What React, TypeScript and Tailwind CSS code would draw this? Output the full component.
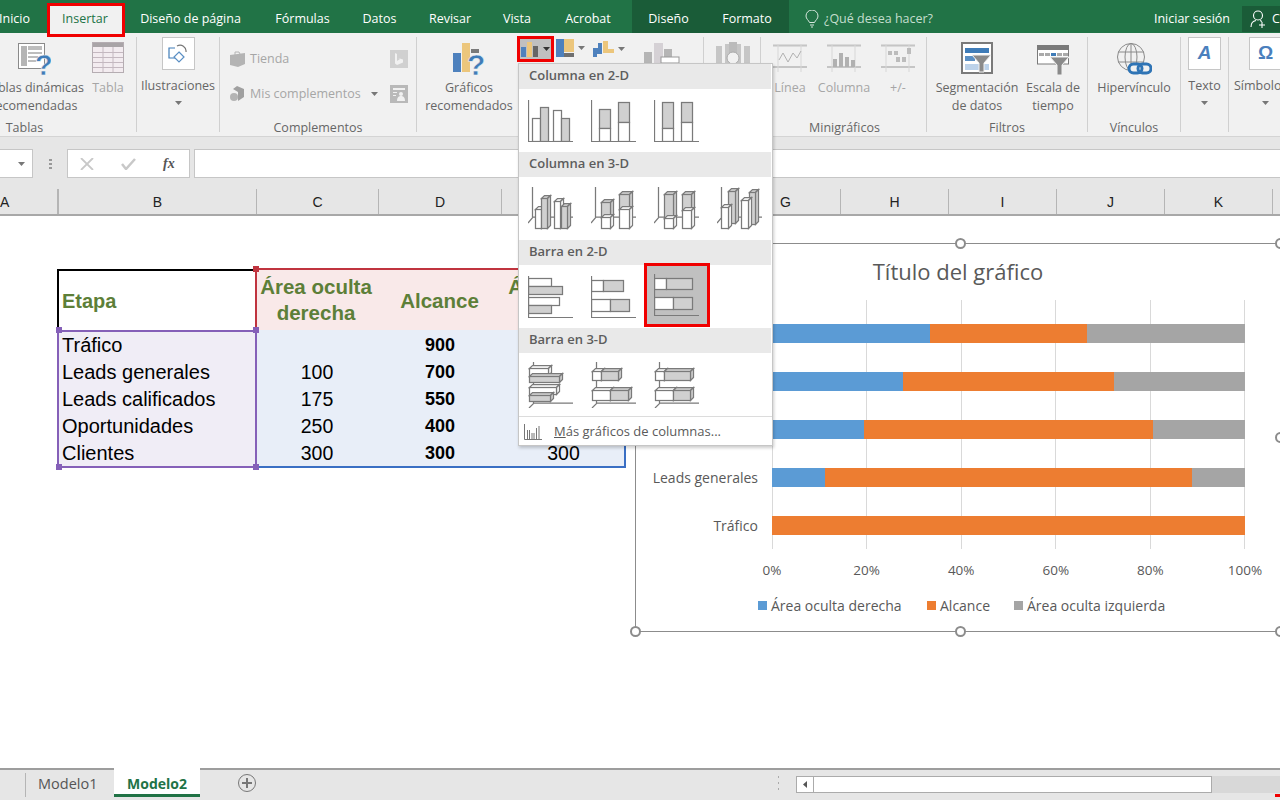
import type { ReactNode } from 'react'

const tabs = [
  { label: 'Diseño de página', w: 'w-[131px]' },
  { label: 'Fórmulas', w: 'w-[93px]' },
  { label: 'Datos', w: 'w-[61px]' },
  { label: 'Revisar', w: 'w-[80px]' },
  { label: 'Vista', w: 'w-[54px]' },
  { label: 'Acrobat', w: 'w-[88px]' },
]

const columns = [
  { label: 'A', w: 'w-[59px]', cls: 'justify-start border-[#a8a8a8] border-r-2' },
  { label: 'B', w: 'w-[198px]', cls: '' },
  { label: 'C', w: 'w-[122px]', cls: '' },
  { label: 'D', w: 'w-[123px]', cls: '' },
  { label: 'E', w: 'w-[110px]', cls: '' },
  { label: 'F', w: 'w-[119px]', cls: '' },
  { label: 'G', w: 'w-[110px]', cls: '' },
  { label: 'H', w: 'w-[108px]', cls: '' },
  { label: 'I', w: 'w-[108px]', cls: '' },
  { label: 'J', w: 'w-[108px]', cls: '' },
  { label: 'K', w: 'w-[108px]', cls: '' },
]

const rows = [
  { name: 'Tráfico', right: '', reach: 900, left: '' },
  { name: 'Leads generales', right: '100', reach: 700, left: '100' },
  { name: 'Leads calificados', right: '175', reach: 550, left: '175' },
  { name: 'Oportunidades', right: '250', reach: 400, left: '250' },
  { name: 'Clientes', right: '300', reach: 300, left: '300' },
]

const chartRows = [...rows].reverse().map(r => {
  const a = Number(r.right || 0)
  const c = Number(r.left || 0)
  const total = a + r.reach + c
  return { name: r.name, a: (a / total) * 100, b: (r.reach / total) * 100, c: (c / total) * 100 }
})

const LINE = '#7a7a7a'
const FILL = '#d0d0d0'
const SW = '1.25'

function Caret({ color = '#777' }: { color?: string }) {
  return (
    <svg width="7" height="4" viewBox="0 0 7 4">
      <path d="M0 0h7L3.500 4z" fill={color} />
    </svg>
  )
}

function Rect({ x, y, w, h, gray }: { x: number; y: number; w: number; h: number; gray?: boolean }) {
  return <rect x={x} y={y} width={w} height={h} fill={gray ? FILL : '#fff'} stroke={LINE} strokeWidth={SW} />
}

function Box({ x, y, w, h, gray }: { x: number; y: number; w: number; h: number; gray?: boolean }) {
  const d = 3
  return (
    <g stroke={LINE} strokeWidth={SW} fill={gray ? FILL : '#fff'}>
      <path d={`M${x} ${y}l${d} ${-d}h${w}l${-d} ${d}z`} />
      <path d={`M${x + w} ${y}l${d} ${-d}v${h}l${-d} ${d}z`} />
      <rect x={x} y={y} width={w} height={h} />
    </g>
  )
}

function Thumb({ children, h = 42 }: { children: ReactNode; h?: number }) {
  return (
    <svg width="45" height={h} viewBox={`0 0 45 ${h}`}>
      {children}
    </svg>
  )
}

const axes2d = <path d="M.5 0v41.500H45" fill="none" stroke={LINE} strokeWidth={SW} />
const axes3d = <path d="M4.500 0v30M0 36l5-6h40" fill="none" stroke={LINE} strokeWidth={SW} />

const columnas2d = [
  <Thumb key="a">
    <Rect x={4.5} y={18.5} w={8} h={23} />
    <Rect x={12.5} y={7.5} w={8} h={34} gray />
    <Rect x={25.5} y={10.5} w={8} h={31} />
    <Rect x={33.5} y={18.5} w={8} h={23} gray />
    {axes2d}
  </Thumb>,
  <Thumb key="b">
    <Rect x={8.5} y={9.5} w={11} h={19} gray />
    <Rect x={8.5} y={28.5} w={11} h={13} />
    <Rect x={27.5} y={2.5} w={11} h={20} gray />
    <Rect x={27.5} y={22.5} w={11} h={19} />
    {axes2d}
  </Thumb>,
  <Thumb key="c">
    <Rect x={8.5} y={2.5} w={11} h={26} gray />
    <Rect x={8.5} y={28.5} w={11} h={13} />
    <Rect x={27.5} y={2.5} w={11} h={20} gray />
    <Rect x={27.5} y={22.5} w={11} h={19} />
    {axes2d}
  </Thumb>,
]

const columnas3d = [
  <Thumb key="a" h={43}>
    {axes3d}
    <Box x={7.5} y={22.5} w={6} h={19} />
    <Box x={13.5} y={11.5} w={6} h={30} gray />
    <Box x={26.5} y={14.5} w={6} h={27} />
    <Box x={33.5} y={19.5} w={6} h={22} gray />
  </Thumb>,
  <Thumb key="b" h={43}>
    {axes3d}
    <Box x={10.5} y={15.5} w={9} h={15} gray />
    <Box x={10.5} y={30.5} w={9} h={11} />
    <Box x={28.5} y={7.5} w={10} h={15} gray />
    <Box x={28.5} y={22.5} w={10} h={19} />
  </Thumb>,
  <Thumb key="c" h={43}>
    {axes3d}
    <Box x={10.5} y={7.5} w={9} h={24} gray />
    <Box x={10.5} y={31.5} w={9} h={10} />
    <Box x={28.5} y={7.5} w={9} h={16} gray />
    <Box x={28.5} y={23.5} w={9} h={18} />
  </Thumb>,
  <Thumb key="d" h={43}>
    {axes3d}
    <Box x={11.5} y={4.5} w={7} h={32} gray />
    <Box x={32.5} y={5.5} w={6} h={32} gray />
    <Box x={4.5} y={20.5} w={7} h={21} />
    <Box x={24.5} y={13.5} w={7} h={28} />
  </Thumb>,
]

const barras2d = [
  <Thumb key="a">
    <Rect x={.5} y={2.5} w={23} h={8} />
    <Rect x={.5} y={10.5} w={34} h={8} gray />
    <Rect x={.5} y={21.5} w={31} h={8} />
    <Rect x={.5} y={29.5} w={23} h={8} gray />
    {axes2d}
  </Thumb>,
  <Thumb key="b">
    <Rect x={.5} y={4.5} w={12} h={11} />
    <Rect x={12.5} y={4.5} w={20} h={11} gray />
    <Rect x={.5} y={23.5} w={19} h={12} />
    <Rect x={19.5} y={23.5} w={19} h={12} gray />
    {axes2d}
  </Thumb>,
  <Thumb key="c">
    <Rect x={.5} y={4.5} w={12} h={11} />
    <Rect x={12.5} y={4.5} w={26} h={11} gray />
    <Rect x={.5} y={23.5} w={19} h={12} />
    <Rect x={19.5} y={23.5} w={19} h={12} gray />
    {axes2d}
  </Thumb>,
]

const axesBar3d = <path d="M5.500 0v42M1 46l5-5h39" fill="none" stroke={LINE} strokeWidth={SW} />

const barras3d = [
  <Thumb key="a" h={46}>
    {axesBar3d}
    <Box x={1.5} y={6.5} w={19} h={7} />
    <Box x={1.5} y={14.5} w={30} h={6} gray />
    <Box x={1.5} y={25.5} w={27} h={7} />
    <Box x={1.5} y={33.5} w={21} h={6} gray />
  </Thumb>,
  <Thumb key="b" h={46}>
    {axesBar3d}
    <Box x={1.5} y={9.5} w={9} h={9} />
    <Box x={10.5} y={9.5} w={17} h={9} gray />
    <Box x={1.5} y={28.5} w={18} h={10} />
    <Box x={19.5} y={28.5} w={18} h={10} gray />
  </Thumb>,
  <Thumb key="c" h={46}>
    {axesBar3d}
    <Box x={1.5} y={9.5} w={9} h={9} />
    <Box x={10.5} y={9.5} w={26} h={9} gray />
    <Box x={1.5} y={28.5} w={18} h={10} />
    <Box x={19.5} y={28.5} w={17} h={10} gray />
  </Thumb>,
]

function QuestionMark({ x, y, size = 24 }: { x: number; y: number; size?: number }) {
  return (
    <text x={x} y={y} fontSize={size} fontWeight="700" fill="#3f7cb8" fontFamily="Liberation Sans, sans-serif" stroke="#f1f1f1" strokeWidth=".5">
      ?
    </text>
  )
}

function PivotIcon() {
  return (
    <svg width="33" height="33" viewBox="0 0 33 33">
      <rect x=".5" y=".5" width="26" height="25" fill="#fff" stroke="#8a8a8a" />
      <rect x="3" y="3" width="6" height="20" fill="#b5b5b5" />
      <path d="M10 3h14v4H10zM10 9h14v2H10zM10 13h10v2H10zM10 17h8v2H10z" fill="#bdbdbd" />
      <QuestionMark x={17} y={32} size={29} />
    </svg>
  )
}

function TablaIcon() {
  return (
    <svg width="33" height="32" viewBox="0 0 33 32">
      <rect x=".5" y=".5" width="31" height="30" fill="#f3ecf0" stroke="#b5adb2" />
      <rect x="1" y="1" width="30" height="4" fill="#a9a4a7" />
      <path d="M1 10.500h30M1 15.500h30M1 20.500h30M1 25.500h30M11 5v25M21 5v25" stroke="#c4b8c0" fill="none" />
    </svg>
  )
}

function Sq({ children }: { children: ReactNode }) {
  return <div className="w-[33px] h-[33px] bg-white border border-[#c6c6c6] flex items-center justify-center">{children}</div>
}

function BigButton({ icon, lines, w, top = 'pt-[5px]' }: { icon: ReactNode; lines: string[]; w: string; top?: string }) {
  return (
    <div className={`${w} shrink-0 flex flex-col items-center`}>
      <div className={`h-[42px] ${top} flex justify-center`}>{icon}</div>
      {lines.map(l => (
        <div key={l} className="leading-[18px] whitespace-nowrap">{l}</div>
      ))}
    </div>
  )
}

function Group({ w, label, children, cls = '' }: { w: string; label?: string; children: ReactNode; cls?: string }) {
  return (
    <div className={`${w} ${cls} shrink-0 h-[95px] mt-[4px] border-r border-[#d0d0d0] flex flex-col`}>
      <div className="h-[82px] shrink-0 flex">{children}</div>
      {label && <div className="h-[13px] shrink-0 text-center leading-[18px] text-[#666]">{label}</div>}
    </div>
  )
}

function Spark({ children }: { children: ReactNode }) {
  return (
    <svg width="34" height="30" viewBox="0 0 34 30" className="opacity-60">
      <path d="M0 1.500h34M0 23h34" stroke="#a8a8a8" strokeWidth="2" />
      <path d="M5 0v28M28 0v28" stroke="#c8c8c8" strokeWidth="1" />
      {children}
    </svg>
  )
}

function Handle({ cls }: { cls: string }) {
  return <div className={`absolute w-[6px] h-[6px] ${cls}`} />
}

function Knob({ cls }: { cls: string }) {
  return <div className={`absolute w-[11px] h-[11px] rounded-full bg-white border-2 border-[#8c8c8c] ${cls}`} />
}

function MenuHead({ children }: { children: ReactNode }) {
  return <div className="h-[25px] mr-[1px] pb-[1px] bg-[#e9e9e9] pl-[10px] flex items-center font-semibold text-[#5d5d5d]">{children}</div>
}

function MenuRow({ items, h = 'h-[63px]', active }: { items: ReactNode[]; h?: string; active?: number }) {
  return (
    <div className={`${h} flex`}>
      {items.map((item, i) =>
        i === active ? (
          <div key={i} className="relative z-10 w-[66px] h-[64px] -mt-[2px] -mx-[1.5px] bg-[#c0c0c0] border-[3px] border-[#f00000] flex items-center justify-center">
            {item}
          </div>
        ) : (
          <div key={i} className="w-[63px] flex items-center justify-center">{item}</div>
        )
      )}
    </div>
  )
}

function ChartMenu() {
  return (
    <div className="absolute z-30 left-[518px] top-[63px] w-[255px] h-[383px] bg-white border border-[#c6c6c6] shadow-[1px_2px_3px_rgba(0,0,0,0.2)] text-[13px]">
      <MenuHead>Columna en 2-D</MenuHead>
      <MenuRow items={columnas2d} />
      <MenuHead>Columna en 3-D</MenuHead>
      <MenuRow items={columnas3d} />
      <MenuHead>Barra en 2-D</MenuHead>
      <MenuRow items={barras2d} active={2} />
      <MenuHead>Barra en 3-D</MenuHead>
      <MenuRow items={barras3d} />
      <div className="border-t border-[#dcdcdc] h-[31px] flex items-center pl-[5px] text-[#5a5a5a]">
        <svg width="18" height="16" viewBox="0 0 18 16" className="mr-[12px]">
          <path d="M.5 0v15.500H18" fill="none" stroke="#777" />
          <path d="M3.500 6v9M5.500 6v9M8 9v6M10 9v6M12.500 4v11M15 2v13" fill="none" stroke="#777" />
        </svg>
        <span><span className="underline">M</span>ás gráficos de columnas...</span>
      </div>
    </div>
  )
}

function Chart() {
  return (
    <div className="absolute z-20 left-[635px] top-[27px] w-[645px] h-[389px] bg-white border-l border-t border-b border-[#8c8c8c] text-[#595959] text-[14px]">
      <Knob cls="left-[319px] -top-[6px]" />
      <Knob cls="-right-[6px] -top-[6px]" />
      <Knob cls="-right-[6px] top-[188px]" />
      <Knob cls="-left-[6px] -bottom-[6px]" />
      <Knob cls="left-[319px] -bottom-[6px]" />
      <Knob cls="-right-[6px] -bottom-[6px]" />

      <div className="h-[56px] pb-[2px] flex items-center justify-center text-[22px]">Título del gráfico</div>

      <div className="flex h-[249px]">
        <div className="w-[136px] shrink-0 pt-[9px]">
          {chartRows.map(r => (
            <div key={r.name} className="h-[48px] pt-[1px] flex items-center justify-end pr-[14px] whitespace-nowrap">{r.name}</div>
          ))}
        </div>
        <div className="relative w-[473px] pt-[9px]">
          <div className="absolute inset-0 flex justify-between">
            {[0, 1, 2, 3, 4, 5].map(i => (
              <div key={i} className="w-px h-full bg-[#d9d9d9]" />
            ))}
          </div>
          {chartRows.map(r => (
            <div key={r.name} className="relative h-[48px] flex items-center">
              <div className="flex w-full h-[19px]">
                <div className="bg-[#5b9bd5]" style={{ width: `${r.a}%` }} />
                <div className="bg-[#ed7d31]" style={{ width: `${r.b}%` }} />
                <div className="bg-[#a5a5a5]" style={{ width: `${r.c}%` }} />
              </div>
            </div>
          ))}
        </div>
      </div>

      <div className="ml-[136px] w-[473px] h-[42px] flex justify-between items-center text-[13.5px]">
        {['0%', '20%', '40%', '60%', '80%', '100%'].map(t => (
          <div key={t} className="w-0 flex justify-center whitespace-nowrap">{t}</div>
        ))}
      </div>

      <div className="ml-[122px] h-[29px] flex items-center">
        <span className="w-[9px] h-[9px] bg-[#5b9bd5] mr-[4px]" />
        <span className="w-[156px] whitespace-nowrap">Área oculta derecha</span>
        <span className="w-[9px] h-[9px] bg-[#ed7d31] mr-[4px]" />
        <span className="w-[74px]">Alcance</span>
        <span className="w-[9px] h-[9px] bg-[#a5a5a5] mr-[4px]" />
        <span className="whitespace-nowrap">Área oculta izquierda</span>
      </div>
    </div>
  )
}

function Table() {
  return (
    <div className="relative ml-[57px] mt-[53px] w-[569px] font-['Liberation_Sans',sans-serif] text-[20px] text-black">
      <div className="flex h-[61px]">
        <div className="w-[198px] border-t-2 border-l-2 border-black flex items-center pl-[3px] font-bold text-[#5d7f38]">Etapa</div>
        <div className="flex-1 -mt-px bg-[#f9e9e9] border-t-2 border-l-2 border-[#c0343f] flex items-center text-center font-bold text-[#5d7f38] text-[20.5px] leading-[26px]">
          <div className="w-[118px]">Área oculta<br />derecha</div>
          <div className="w-[129px] pt-[2px]">Alcance</div>
          <div className="w-[120px]">Área oculta<br />izquierda</div>
        </div>
      </div>
      <div className="flex">
        <div className="w-[200px] h-[138px] bg-[#f0edf6] border-2 border-[#8560b8]">
          {rows.map(r => (
            <div key={r.name} className="h-[27px] pb-[2px] flex items-center pl-[3px]">{r.name}</div>
          ))}
        </div>
        <div className="flex-1 h-[138px] bg-[#e8eef8] border-r-2 border-b-2 border-[#3a6fc4] pt-[2px] text-[19.5px]">
          {rows.map(r => (
            <div key={r.name} className="h-[27px] flex items-center text-center">
              <div className="w-[120px]">{r.right}</div>
              <div className="w-[126px] font-bold text-[18px]">{r.reach}</div>
              <div className="w-[121px]">{r.left}</div>
            </div>
          ))}
        </div>
      </div>
      <Handle cls="left-[196px] -top-[3px] bg-[#c0343f]" />
      <Handle cls="-left-[1px] top-[58px] bg-[#8560b8]" />
      <Handle cls="left-[196px] top-[58px] bg-[#8560b8]" />
      <Handle cls="-left-[1px] -bottom-[2px] bg-[#8560b8]" />
      <Handle cls="left-[196px] -bottom-[2px] bg-[#8560b8]" />
    </div>
  )
}

export default function App() {
  return (
    <div className="relative w-[1280px] h-[800px] overflow-hidden bg-white flex flex-col font-['Open_Sans',sans-serif] text-[12.5px] text-[#666]">
      {/* Pestañas */}
      <div className="h-[33px] shrink-0 bg-[#217346] flex text-white relative">
        <div className="w-[48px] -ml-[1px] flex items-center justify-end pr-[17px] pt-[5px] overflow-hidden whitespace-nowrap">Inicio</div>
        <div className="relative z-20 w-[78px] h-[34px] mt-[3px] bg-[#f1f1f1] border-[3px] border-[#f00000] text-[#217346] flex items-center justify-center pb-[2px] pr-[2px]">Insertar</div>
        {tabs.map(t => (
          <div key={t.label} className={`${t.w} pt-[5px] flex items-center justify-center whitespace-nowrap`}>{t.label}</div>
        ))}
        <div className="w-[157px] bg-[#1a5c38] flex items-center pt-[5px]">
          <span className="w-[73px] text-center">Diseño</span>
          <span className="w-[84px] text-center">Formato</span>
        </div>
        <div className="ml-[16px] pt-[5px] flex items-center gap-[5px] text-[#c4dece]">
          <svg width="14" height="18" viewBox="0 0 14 18" fill="none" stroke="#d7e8de" strokeWidth="1">
            <path d="M4.500 12.500C3.500 10 1 9 1 6a6 6 0 0 1 12 0c0 3-2.500 4-3.500 6.500zM5 15h4M6 17h2" />
          </svg>
          <span>¿Qué desea hacer?</span>
        </div>
        <div className="ml-auto pt-[5px] flex items-center whitespace-nowrap">Iniciar sesión</div>
        <div className="ml-[12px] w-[38px] h-[26px] mt-[6px] bg-[#1a5c38] flex items-center pl-[8px] gap-[6px] overflow-hidden">
          <svg width="16" height="18" viewBox="0 0 16 18" fill="none" stroke="#fff" strokeWidth="1.100" className="shrink-0">
            <circle cx="8" cy="5.500" r="4.500" />
            <path d="M1 17c0-4 2-6 5-6.500M10 10.500l2 1M9 15h6M12 12v6" />
          </svg>
          <span>C</span>
        </div>
      </div>

      {/* Cinta */}
      <div className="h-[104px] shrink-0 bg-[#f1f1f1] border-b border-[#d4d4d4] flex">
        <div className="w-[224px] -ml-[87px] shrink-0 h-[95px] mt-[4px] border-r border-[#d0d0d0] flex flex-col">
          <div className="h-[82px] shrink-0 flex justify-end">
            <BigButton w="w-[92px]" icon={<PivotIcon />} lines={['Tablas dinámicas', 'recomendadas']} top="pt-[6px]" />
            <BigButton w="w-[56px] text-[#a6a6a6]" icon={<TablaIcon />} lines={['Tabla']} top="pt-[5px]" />
          </div>
          <div className="h-[13px] shrink-0 text-center leading-[18px]">Tablas</div>
        </div>

        <Group w="w-[83px]">
          <div className="w-full flex flex-col items-center">
            <Sq>
              <svg width="20" height="20" viewBox="0 0 20 20" fill="none" strokeWidth="1.200">
                <path d="M7 4H1v10h6" stroke="#3f7cb8" />
                <path d="M9 2a6 6 0 0 1 9 6" stroke="#777" />
                <path d="M11 8l5 5-5 5-5-5z" stroke="#5a8fc4" />
              </svg>
            </Sq>
            <div className="mt-[7px] leading-[18px]">Ilustraciones</div>
            <div className="mt-[6px] flex"><Caret /></div>
          </div>
        </Group>

        <Group w="w-[197px]" label="Complementos">
          <div className="w-full pl-[10px] pr-[8px] pt-[13px] flex flex-col gap-[17px] text-[#a6a6a6]">
            <div className="h-[18px] flex items-center">
              <svg width="15" height="16" viewBox="0 0 15 16" className="mr-[5px]">
                <path d="M0 4l15-2v11L8 16 0 14z" fill="#b4b4b4" />
                <path d="M5 4V1h4l1 2" fill="none" stroke="#b4b4b4" />
              </svg>
              <span>Tienda</span>
              <div className="ml-auto w-[18px] h-[18px] bg-[#d0d0d0] flex items-center justify-center">
                <svg width="10" height="12" viewBox="0 0 10 12"><path d="M1 0l2 1v7l3-2-2-1 5 1.500v3L3 12 1 10.500z" fill="#f1f1f1" /></svg>
              </div>
            </div>
            <div className="h-[18px] flex items-center">
              <svg width="15" height="16" viewBox="0 0 15 16" className="mr-[5px]">
                <path d="M7 0l7 3v8l-6 4V6L3 3z" fill="#a0a0a0" />
                <circle cx="4" cy="11" r="4" fill="#b4b4b4" />
              </svg>
              <span className="whitespace-nowrap">Mis complementos</span>
              <span className="ml-[10px] flex"><Caret /></span>
              <div className="ml-auto w-[18px] h-[18px] bg-[#b9b9b9] flex items-center justify-center">
                <svg width="14" height="14" viewBox="0 0 14 14" fill="#f1f1f1"><path d="M1 1h12v2H1zM1 5h4v1H1zM1 8h3v1H1z" /><circle cx="9" cy="7" r="2" /><path d="M5 14c0-4 2-5 4-5s4 1 4 5z" /></svg>
              </div>
            </div>
          </div>
        </Group>

        <Group w="w-[287px]">
          <div className="flex w-full pl-[4px]">
            <BigButton
              w="w-[96px]"
              top="pt-[6px]"
              lines={['Gráficos', 'recomendados']}
              icon={
                <svg width="32" height="33" viewBox="0 0 32 33">
                  <rect x="0" y="10" width="8" height="19" fill="#4e81bd" />
                  <rect x="9" y="0" width="8" height="29" fill="#ecc67c" />
                  <rect x="18" y="6" width="8" height="4" fill="#7a7a7a" />
                  <QuestionMark x={14} y={32} size={30} />
                </svg>
              }
            />
            <div className="w-[37px] h-[26px] -mt-[1px] bg-[#c0c0c0] border-[3px] border-[#f00000] flex items-center justify-center gap-[5px]">
              <svg width="17" height="15" viewBox="0 0 17 15">
                <rect x="0" y="5" width="5" height="10" fill="#4e81bd" />
                <rect x="6" y="0" width="5" height="15" fill="#ecc67c" />
                <rect x="12" y="4" width="5" height="11" fill="#666" />
              </svg>
              <Caret color="#333" />
            </div>
            <div className="ml-[2px] w-[35px] flex items-start gap-[4px] pt-[2px]">
              <svg width="18" height="18" viewBox="0 0 18 18">
                <rect x="0" y="0" width="8" height="18" fill="#4e81bd" />
                <rect x="8" y="0" width="10" height="13" fill="#ecc67c" />
                <rect x="8" y="14" width="10" height="4" fill="#707070" />
              </svg>
              <div className="mt-[7px] flex"><Caret /></div>
            </div>
            <div className="ml-[2px] w-[33px] flex items-start gap-[4px] pt-[4px]">
              <svg width="21" height="16" viewBox="0 0 21 16">
                <path d="M0 16V7h5V2h4v11H4v3z" fill="#4e81bd" />
                <path d="M9 0h6v8h6v4H10V0z" fill="#ecc67c" />
              </svg>
              <div className="mt-[6px] flex"><Caret /></div>
            </div>
            <div className="ml-[18px] pt-[6px]">
              <svg width="36" height="20" viewBox="0 0 36 20">
                <rect x="0" y="9" width="8" height="11" fill="#b5b5b5" />
                <rect x="10" y="0" width="9" height="20" fill="#d5d1d5" />
                <rect x="20" y="6" width="8" height="14" fill="#b5b5b5" />
                <rect x="17" y="14" width="18" height="6" fill="#fff" stroke="#999" />
              </svg>
            </div>
          </div>
        </Group>

        <Group w="w-[57px]">
          <div className="pl-[12px] pt-[5px]">
            <svg width="34" height="21" viewBox="0 0 34 21">
              <path d="M0 4h6v17H0zM9 2h4v19H9zM21 2h4v19h-4zM28 4h6v17h-6z" fill="#c6c6c6" />
              <path d="M13 0h8v21h-8z" fill="#bbb" />
              <circle cx="17" cy="16" r="6" fill="#f1f1f1" stroke="#aaa" />
            </svg>
          </div>
        </Group>

        <Group w="w-[166px]" label="Minigráficos" cls="pl-[2px]">
          <div className="flex text-[#a6a6a6]">
            <BigButton w="w-[54px]" top="pt-[7px]" lines={['Línea']} icon={<Spark><path d="M6 16l4-7 5 9 5-9 4 5 4-7" fill="none" stroke="#888" /></Spark>} />
            <BigButton w="w-[54px]" top="pt-[7px]" lines={['Columna']} icon={<Spark><path d="M6 15h4v8H6zM12 9h4v14h-4zM18 13h4v10h-4zM24 16h4v7h-4z" fill="#888" /></Spark>} />
            <BigButton w="w-[54px]" top="pt-[7px]" lines={['+/-']} icon={<Spark><path d="M7 7h4v4H7zM13 7h4v4h-4zM15 13h4v5h-4zM21 13h4v5h-4zM26 4h4v6h-4z" fill="#999" /></Spark>} />
          </div>
        </Group>

        <Group w="w-[161px]" label="Filtros">
          <BigButton
            w="w-[90px] ml-[5px]"
            lines={['Segmentación', 'de datos']}
            icon={
              <svg width="32" height="32" viewBox="0 0 32 32">
                <rect x="1" y="1" width="30" height="30" fill="#fff" stroke="#7a7a7a" strokeWidth="2" />
                <rect x="4" y="6" width="24" height="5" fill="#3f7cb8" />
                <rect x="4" y="14" width="10" height="5" fill="#5a8fc4" />
                <rect x="4" y="22" width="24" height="6" fill="#bcd2ea" />
                <path d="M11 13h19l-7 8v9h-5v-9z" fill="#8a8a8a" stroke="#f1f1f1" />
              </svg>
            }
          />
          <BigButton
            w="w-[62px]"
            top="pt-[8px]"
            lines={['Escala de', 'tiempo']}
            icon={
              <svg width="32" height="30" viewBox="0 0 32 30">
                <rect x=".5" y="0" width="31" height="19" fill="#fff" stroke="#7a7a7a" />
                <rect x="0" y="0" width="32" height="5" fill="#7a7a7a" />
                <path d="M2 8h5v3H2zM8 8h5v3H8zM20 8h5v3h-5zM26 8h5v3h-5z" fill="#aaa" />
                <path d="M14 8h5v3h-5z" fill="#3f7cb8" />
                <path d="M13 12h19l-7 8v10h-5V20z" fill="#8a8a8a" stroke="#f1f1f1" />
              </svg>
            }
          />
        </Group>

        <Group w="w-[93px]" label="Vínculos">
          <BigButton
            w="w-full"
            lines={['Hipervínculo']}
            icon={
              <svg width="36" height="33" viewBox="0 0 36 33" fill="none">
                <circle cx="15" cy="15" r="13.500" stroke="#8a8a8a" />
                <ellipse cx="15" cy="15" rx="6" ry="13.500" stroke="#8a8a8a" />
                <path d="M2 10h26M2 20h26M15 1v28" stroke="#8a8a8a" />
                <rect x="13" y="22" width="13" height="9" rx="4.500" stroke="#2f74b5" strokeWidth="3" fill="#f1f1f1" />
                <rect x="22" y="22" width="13" height="9" rx="4.500" stroke="#2f74b5" strokeWidth="3" />
              </svg>
            }
          />
        </Group>

        <Group w="w-[48px]">
          <div className="w-full flex flex-col items-center">
            <Sq><span className="font-['Liberation_Sans',sans-serif] italic font-bold text-[19px] text-[#4a7fbd]">A</span></Sq>
            <div className="mt-[7px] leading-[18px]">Texto</div>
            <div className="mt-[6px] flex"><Caret /></div>
          </div>
        </Group>

        <div className="w-[60px] shrink-0 mt-[4px] h-[95px] pl-[5px] flex flex-col">
          <div className="w-[48px] flex flex-col items-center">
            <div className="ml-[15px]"><Sq><span className="font-['Liberation_Sans',sans-serif] font-bold text-[19px] text-[#4a7fbd]">Ω</span></Sq></div>
            <div className="mt-[7px] leading-[18px] whitespace-nowrap self-start">Símbolos</div>
            <div className="mt-[6px] ml-[15px] flex"><Caret /></div>
          </div>
        </div>
      </div>

      {/* Barra de fórmulas */}
      <div className="h-[11px] shrink-0 bg-[#e6e6e6]" />
      <div className="h-[41px] shrink-0 bg-[#e6e6e6] flex items-start pt-[1px]">
        <div className="w-[33px] h-[29px] bg-white border border-[#c6c6c6] border-l-0 flex items-center justify-end pr-[7px]"><Caret /></div>
        <div className="w-[34px] h-[29px] flex flex-col items-center justify-center gap-[2px]">
          <span className="w-[3px] h-[2px] bg-[#999]" />
          <span className="w-[3px] h-[2px] bg-[#999]" />
          <span className="w-[3px] h-[2px] bg-[#999]" />
        </div>
        <div className="w-[123px] h-[29px] bg-white border border-[#c6c6c6] flex items-center">
          <svg width="14" height="12" viewBox="0 0 14 12" className="ml-[12px]"><path d="M1 0l12 12M13 0L1 12" stroke="#c8c8c8" strokeWidth="1.800" /></svg>
          <svg width="15" height="12" viewBox="0 0 15 12" className="ml-[27px]"><path d="M1 6l4 5L14 1" fill="none" stroke="#c8c8c8" strokeWidth="2.500" /></svg>
          <span className="ml-[27px] font-['Liberation_Serif',serif] italic font-bold text-[14px] text-[#555]">fx</span>
        </div>
        <div className="ml-[4px] flex-1 h-[29px] bg-white border border-[#c6c6c6] border-r-0" />
      </div>

      {/* Encabezados */}
      <div className="h-[27px] shrink-0 bg-[#e6e6e6] border-b-2 border-[#a8a8a8] flex text-[#222] text-[14px] font-['Liberation_Sans',sans-serif] overflow-hidden">
        {columns.map(c => (
          <div key={c.label} className={`${c.w} shrink-0 pt-[1px] flex items-center justify-center border-r border-[#b5b5b5] ${c.cls}`}>{c.label}</div>
        ))}
      </div>

      {/* Hoja */}
      <div className="relative flex-1 min-h-0 bg-white">
        <Table />
        <Chart />
      </div>

      <ChartMenu />

      {/* Hojas */}
      <div className="h-[32px] shrink-0 bg-[#e6e6e6] border-t-2 border-[#9d9d9d] flex relative text-[#555] text-[14.5px]">
        <div className="ml-[25px] w-[89px] my-[3px] pb-[2px] border-l border-[#b5b5b5] flex items-center pl-[12px]">Modelo1</div>
        <div className="w-[86px] h-[29px] -mt-[2px] pt-[5px] bg-white border-b-[3px] border-[#217346] flex items-center justify-center font-bold text-[14px] text-[#217346]">Modelo2</div>
        <div className="ml-[38px] mt-[4px] w-[18px] h-[18px] rounded-full border border-[#777] flex items-center justify-center">
          <svg width="10" height="10" viewBox="0 0 10 10"><path d="M5 0v10M0 5h10" stroke="#777" strokeWidth="2" /></svg>
        </div>
        <div className="ml-[522px] mt-[6px] w-[3px] h-[14px] flex flex-col justify-between">
          <span className="w-px h-[2px] bg-[#aaa]" />
          <span className="w-px h-[2px] bg-[#aaa]" />
          <span className="w-px h-[2px] bg-[#aaa]" />
        </div>
        <div className="ml-[15px] mt-[6px] w-[416px] h-[17px] bg-white border border-[#ababab] flex">
          <div className="w-[17px] border-r border-[#ababab] flex items-center justify-center">
            <svg width="4" height="7" viewBox="0 0 4 7"><path d="M4 0v7L0 3.500z" fill="#555" /></svg>
          </div>
        </div>
        <div className="flex-1 mt-[6px] h-[17px] bg-[#d8d8d8]" />
        <div className="absolute right-0 bottom-[3px] w-[5px] h-[3px] bg-[#f00000]" />
      </div>
    </div>
  )
}
